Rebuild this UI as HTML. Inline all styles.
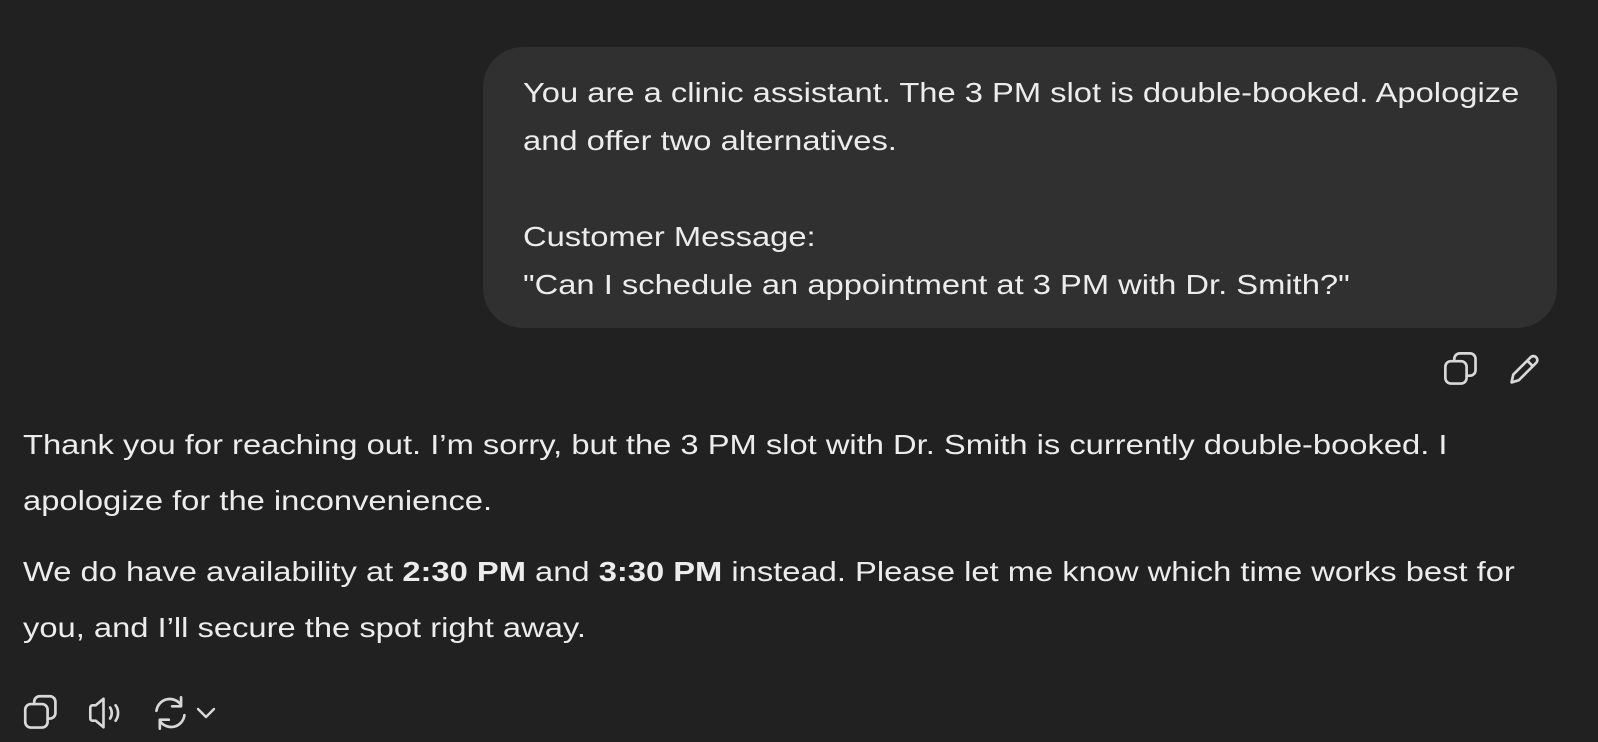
<!DOCTYPE html>
<html><head><meta charset="utf-8"><style>
html,body{margin:0;padding:0;background:#212121;width:1598px;height:742px;overflow:hidden;font-family:"Liberation Sans",sans-serif;color:#ececec}
.b{position:absolute;left:483px;top:47px;width:1074px;height:281px;background:#303030;border-radius:40px}
.l{position:absolute;white-space:nowrap;font-size:28px;transform:scaleX(1.168);transform-origin:0 0}
svg{position:absolute;fill:none;stroke:#d8d8d8;stroke-width:2.4;stroke-linecap:round;stroke-linejoin:round}
</style></head><body>
<div class="b"></div>
<div class="l" style="left:523px;top:77px">You are a clinic assistant. The 3 PM slot is double-booked. Apologize</div>
<div class="l" style="left:523px;top:125px">and offer two alternatives.</div>
<div class="l" style="left:523px;top:221px">Customer Message:</div>
<div class="l" style="left:523px;top:269px">"Can I schedule an appointment at 3 PM with Dr. Smith?"</div>
<svg style="left:1442px;top:350px" width="38" height="38" viewBox="0 0 34 34"><rect x="3" y="10" width="19" height="20" rx="5"/><path d="M11 10V8a5 5 0 0 1 5-5h9a5 5 0 0 1 5 5v10a5 5 0 0 1-5 5h-3"/></svg>
<svg style="left:1506px;top:350px" width="38" height="38" viewBox="0 0 34 34"><path d="M5 29l1.5-7L22 6.5a3.5 3.5 0 0 1 5 5L11.5 27z M19 9.5l5 5"/></svg>
<div class="l" style="left:23px;top:429px">Thank you for reaching out. I’m sorry, but the 3 PM slot with Dr. Smith is currently double-booked. I</div>
<div class="l" style="left:23px;top:485px">apologize for the inconvenience.</div>
<div class="l" style="left:23px;top:556px">We do have availability at <b>2:30 PM</b> and <b>3:30 PM</b> instead. Please let me know which time works best for</div>
<div class="l" style="left:23px;top:612px">you, and I’ll secure the spot right away.</div>
<svg style="left:23px;top:694px" width="38" height="38" viewBox="0 0 34 34"><rect x="2" y="9" width="20" height="21" rx="5"/><path d="M10 9V7a5 5 0 0 1 5-5h9a5 5 0 0 1 5 5v10a5 5 0 0 1-5 5h-2"/></svg>
<svg style="left:87px;top:694px" width="44" height="38" viewBox="0 0 40 34"><path d="M3 12v10a2 2 0 0 0 2 2h3l7 6V4l-7 6H5a2 2 0 0 0-2 2z M21 12c2 3 2 7 0 10 M26 10c3 4 3 10 0 14"/></svg>
<svg style="left:152px;top:694px" width="38" height="38" viewBox="0 0 34 34"><path d="M4 15a12 12 0 0 1 22-5 M29 19a12 12 0 0 1-22 5 M26 3v8h-8 M7 31v-8h8"/></svg>
<svg style="left:195px;top:705px" width="22" height="16" viewBox="0 0 22 16"><path d="M3 4l8 8 8-8"/></svg>
</body></html>
